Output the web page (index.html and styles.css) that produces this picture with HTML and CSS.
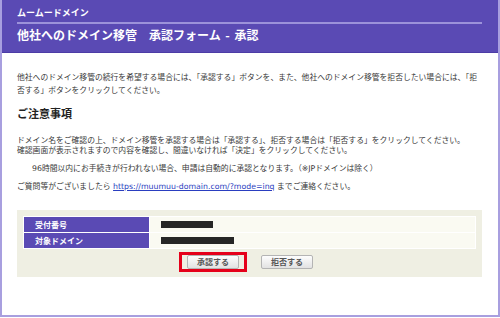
FILE: index.html
```html
<!DOCTYPE html>
<html lang="ja">
<head>
<meta charset="utf-8">
<title>他社へのドメイン移管 承認フォーム - 承認</title>
<link rel="stylesheet" href="styles.css">
</head>
<body>
<div class="page">
  <header class="header">
    <div class="brand">ムームードメイン</div>
    <h1 class="title">他社へのドメイン移管　承認フォーム - 承認</h1>
  </header>
  <main class="content">
    <p class="intro">他社へのドメイン移管の続行を希望する場合には、「承認する」ボタンを、また、他社へのドメイン移管を拒否したい場合には、「拒否する」ボタンをクリックしてください。</p>
    <h2 class="notice-title">ご注意事項</h2>
    <p class="notice">ドメイン名をご確認の上、ドメイン移管を承認する場合は「承認する」、拒否する場合は「拒否する」をクリックしてください。<br>確認画面が表示されますので内容を確認し、間違いなければ「決定」をクリックしてください。</p>
    <p class="notice indent">96時間以内にお手続きが行われない場合、申請は自動的に承認となります。（※JPドメインは除く）</p>
    <p class="notice">ご質問等がございましたら <a class="link" href="#">https://muumuu-domain.com/?mode=inq</a> までご連絡ください。</p>
    <section class="form-box">
      <table class="info">
        <tr>
          <th>受付番号</th>
          <td><span class="mask mask-short"></span></td>
        </tr>
        <tr>
          <th>対象ドメイン</th>
          <td><span class="mask mask-long"></span></td>
        </tr>
      </table>
      <div class="actions">
        <div class="highlight"><button class="btn" type="button">承認する</button></div>
        <button class="btn" type="button">拒否する</button>
      </div>
    </section>
  </main>
</div>
</body>
</html>
```
FILE: styles.css
```css
* { box-sizing: border-box; }
html, body {
  margin: 0;
  padding: 0;
  background: #fff;
}
body {
  font-family: "DejaVu Sans", "Noto Sans CJK JP", sans-serif;
  color: #383838;
}
.page {
  width: 500px;
  height: 317px;
  border: 2px solid #a89fdf;
  border-top: 0;
  overflow: hidden;
}
.header {
  background: #5a4ab4;
  height: 53px;
  padding: 0 16px 0 15px;
  border-bottom: 1px solid #4c3ca6;
  color: #fff;
}
.brand {
  font-family: "Noto Sans CJK JP", sans-serif;
  font-size: 9px;
  font-weight: bold;
  line-height: 12px;
  padding-top: 7px;
  padding-bottom: 3px;
  border-bottom: 2px solid #9c92da;
}
.title {
  margin: 4px 0 0;
  font-family: "Noto Sans CJK JP", sans-serif;
  font-size: 12px;
  font-weight: bold;
  line-height: 14px;
  word-spacing: 2px;
}
.content {
  padding: 0 16px 0 15px;
}
.intro {
  margin: 18px 0 0;
  font-size: 7.8px;
  line-height: 13px;
}
.notice-title {
  margin: 9px 0 0;
  font-family: "Noto Sans CJK JP", sans-serif;
  font-size: 11px;
  font-weight: bold;
  line-height: 14px;
  color: #222;
}
.notice {
  margin: 8px 0 0;
  font-size: 7.8px;
  line-height: 10px;
}
.notice-title + .notice {
  margin-top: 16px;
}
.indent {
  padding-left: 15px;
}
.link {
  color: #2a3ec0;
  text-decoration: underline;
}
.form-box {
  margin-top: 18px;
  background: #efefe3;
  padding: 6px 6px 5px;
}
.info {
  width: 100%;
  border-collapse: collapse;
}
.info th,
.info td {
  border: 1px solid #fff;
  height: 16px;
  padding: 0;
  font-size: 8px;
}
.info th {
  width: 126px;
  background: #5a4ab4;
  color: #fff;
  text-align: left;
  padding-left: 11px;
  font-family: "Noto Sans CJK JP", sans-serif;
  font-weight: bold;
}
.info td {
  background: #fafaf2;
  padding-left: 11px;
}
.mask {
  display: block;
  height: 7px;
  background: #262626;
}
.mask-short { width: 52px; }
.mask-long { width: 73px; }
.actions {
  display: flex;
  align-items: center;
  gap: 14px;
  margin-top: 3px;
  padding-left: 156px;
}
.highlight {
  border: 3px solid #e5001a;
  padding: 0 5px;
  display: flex;
}
.btn {
  width: 52px;
  height: 14px;
  padding: 0;
  border: 1px solid #b4b4b4;
  border-radius: 2px;
  background: linear-gradient(#fdfdfd, #e2e2e2);
  font-family: "Noto Sans CJK JP", sans-serif;
  font-size: 8px;
  font-weight: bold;
  line-height: 12px;
  color: #555;
}
```
